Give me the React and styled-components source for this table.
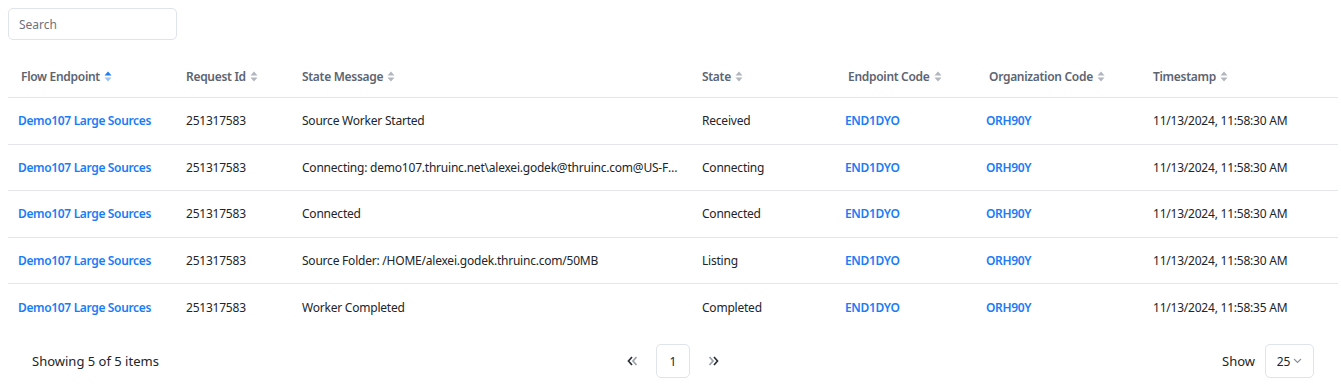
import React from "react";
import styled, { createGlobalStyle } from "styled-components";

const GlobalStyle = createGlobalStyle`
  body {
    margin: 0;
    background: #fff;
    font-family: "Noto Sans", "Open Sans", sans-serif;
    color: #212529;
  }
`;

const Page = styled.div`
  padding: 8px 3px 0 8px;
`;

const SearchInput = styled.input`
  display: block;
  width: 169px;
  height: 32px;
  box-sizing: border-box;
  border: 1px solid #dfe3ea;
  border-radius: 5px;
  padding: 0 10px;
  font-family: inherit;
  font-size: 12px;
  color: #212529;
  outline: none;
  &::placeholder {
    color: #6c727d;
  }
`;

const Table = styled.table`
  width: 100%;
  margin-top: 16px;
  border-collapse: collapse;
  table-layout: fixed;
`;

const HeadCell = styled.th`
  height: 41px;
  padding: 0 10px 0 ${({ $shift }) => 10 + ($shift || 0)}px;
  text-align: left;
  font-size: 12px;
  font-weight: 600;
  letter-spacing: -0.3px;
  color: #5d6471;
  white-space: nowrap;
  border-bottom: 1px solid #e3e6ee;
`;

const HeadInner = styled.span`
  display: inline-flex;
  align-items: center;
  gap: 4px;
`;

const Row = styled.tr`
  height: 46.5px;
  & + & td {
    border-top: 1px solid #e3e6ee;
  }
`;

const Cell = styled.td`
  padding: 0 10px;
  font-size: 12px;
  color: ${({ $link }) => ($link ? "#1a7cf6" : "#212529")};
  font-weight: ${({ $link }) => ($link ? 600 : 400)};
  letter-spacing: ${({ $link }) => ($link ? "-0.35px" : "-0.22px")};
  white-space: nowrap;
  overflow: hidden;
  text-overflow: ellipsis;
`;

const Footer = styled.div`
  display: grid;
  grid-template-columns: 1fr auto 1fr;
  align-items: center;
  height: 62px;
  padding: 0 24px 0 24px;
  font-size: 13px;
`;

const Pager = styled.div`
  display: flex;
  align-items: center;
  gap: 12px;
`;

const PagerArrow = styled.button`
  border: none;
  background: none;
  padding: 0 6px;
  display: flex;
  align-items: center;
  cursor: pointer;
`;

const PageBox = styled.div`
  width: 34px;
  height: 34px;
  box-sizing: border-box;
  border: 1px solid #dfe3ea;
  border-radius: 5px;
  display: flex;
  align-items: center;
  justify-content: center;
  font-size: 12px;
`;

const ShowWrap = styled.div`
  justify-self: end;
  display: flex;
  align-items: center;
  gap: 10px;
`;

const SelectBox = styled.div`
  width: 49px;
  height: 34px;
  box-sizing: border-box;
  border: 1px solid #dfe3ea;
  border-radius: 5px;
  display: flex;
  align-items: center;
  justify-content: center;
  gap: 3px;
  font-size: 12px;
`;

const SortIcon = ({ active }) => (
  <svg width="8" height="11" viewBox="0 0 8 11">
    <path d="M4 0.5 L7.5 4.5 H0.5 Z" fill={active ? "#1a7cf6" : "#b1b6bf"} />
    <path d="M4 10.5 L7.5 6.5 H0.5 Z" fill={active ? "#9cc3f7" : "#b1b6bf"} />
  </svg>
);

const DoubleChevron = ({ dir }) => (
  <svg width="11" height="10" viewBox="0 0 11 10" style={dir === "right" ? { transform: "scaleX(-1)" } : undefined}>
    <path d="M5 1 L1.5 5 L5 9" stroke="#2a2f36" strokeWidth="1.7" fill="none" />
    <path d="M9.5 1 L6 5 L9.5 9" stroke="#9aa0a8" strokeWidth="1.7" fill="none" />
  </svg>
);

const ChevronDown = () => (
  <svg width="9" height="6" viewBox="0 0 9 6">
    <path d="M1 1 L4.5 4.5 L8 1" stroke="#8a9099" strokeWidth="1.1" fill="none" />
  </svg>
);

const columns = [
  { key: "flow", title: "Flow Endpoint", width: 168, shift: 3, link: true, active: true },
  { key: "req", title: "Request Id", width: 116 },
  { key: "msg", title: "State Message", width: 400 },
  { key: "state", title: "State", width: 143 },
  { key: "ep", title: "Endpoint Code", width: 141, shift: 3, link: true },
  { key: "org", title: "Organization Code", width: 167, shift: 3, link: true },
  { key: "ts", title: "Timestamp", width: 195 },
];

const base = { flow: "Demo107 Large Sources", req: "251317583", ep: "END1DYO", org: "ORH90Y" };

const rows = [
  { ...base, msg: "Source Worker Started", state: "Received", ts: "11/13/2024, 11:58:30 AM" },
  { ...base, msg: "Connecting: demo107.thruinc.net\\alexei.godek@thruinc.com@US-FTP-01 (Default)", state: "Connecting", ts: "11/13/2024, 11:58:30 AM" },
  { ...base, msg: "Connected", state: "Connected", ts: "11/13/2024, 11:58:30 AM" },
  { ...base, msg: "Source Folder: /HOME/alexei.godek.thruinc.com/50MB", state: "Listing", ts: "11/13/2024, 11:58:30 AM" },
  { ...base, msg: "Worker Completed", state: "Completed", ts: "11/13/2024, 11:58:35 AM" },
];

export default function App() {
  return (
    <Page>
      <GlobalStyle />
      <SearchInput placeholder="Search" />
      <Table>
        <colgroup>
          {columns.map((c) => (
            <col key={c.key} style={{ width: c.width }} />
          ))}
        </colgroup>
        <thead>
          <tr>
            {columns.map((c) => (
              <HeadCell key={c.key} $shift={c.shift}>
                <HeadInner>
                  {c.title}
                  <SortIcon active={c.active} />
                </HeadInner>
              </HeadCell>
            ))}
          </tr>
        </thead>
        <tbody>
          {rows.map((r, i) => (
            <Row key={i}>
              {columns.map((c) => (
                <Cell key={c.key} $link={c.link}>
                  {r[c.key]}
                </Cell>
              ))}
            </Row>
          ))}
        </tbody>
      </Table>
      <Footer>
        <span>Showing 5 of 5 items</span>
        <Pager>
          <PagerArrow>
            <DoubleChevron dir="left" />
          </PagerArrow>
          <PageBox>1</PageBox>
          <PagerArrow>
            <DoubleChevron dir="right" />
          </PagerArrow>
        </Pager>
        <ShowWrap>
          Show
          <SelectBox>
            25
            <ChevronDown />
          </SelectBox>
        </ShowWrap>
      </Footer>
    </Page>
  );
}
